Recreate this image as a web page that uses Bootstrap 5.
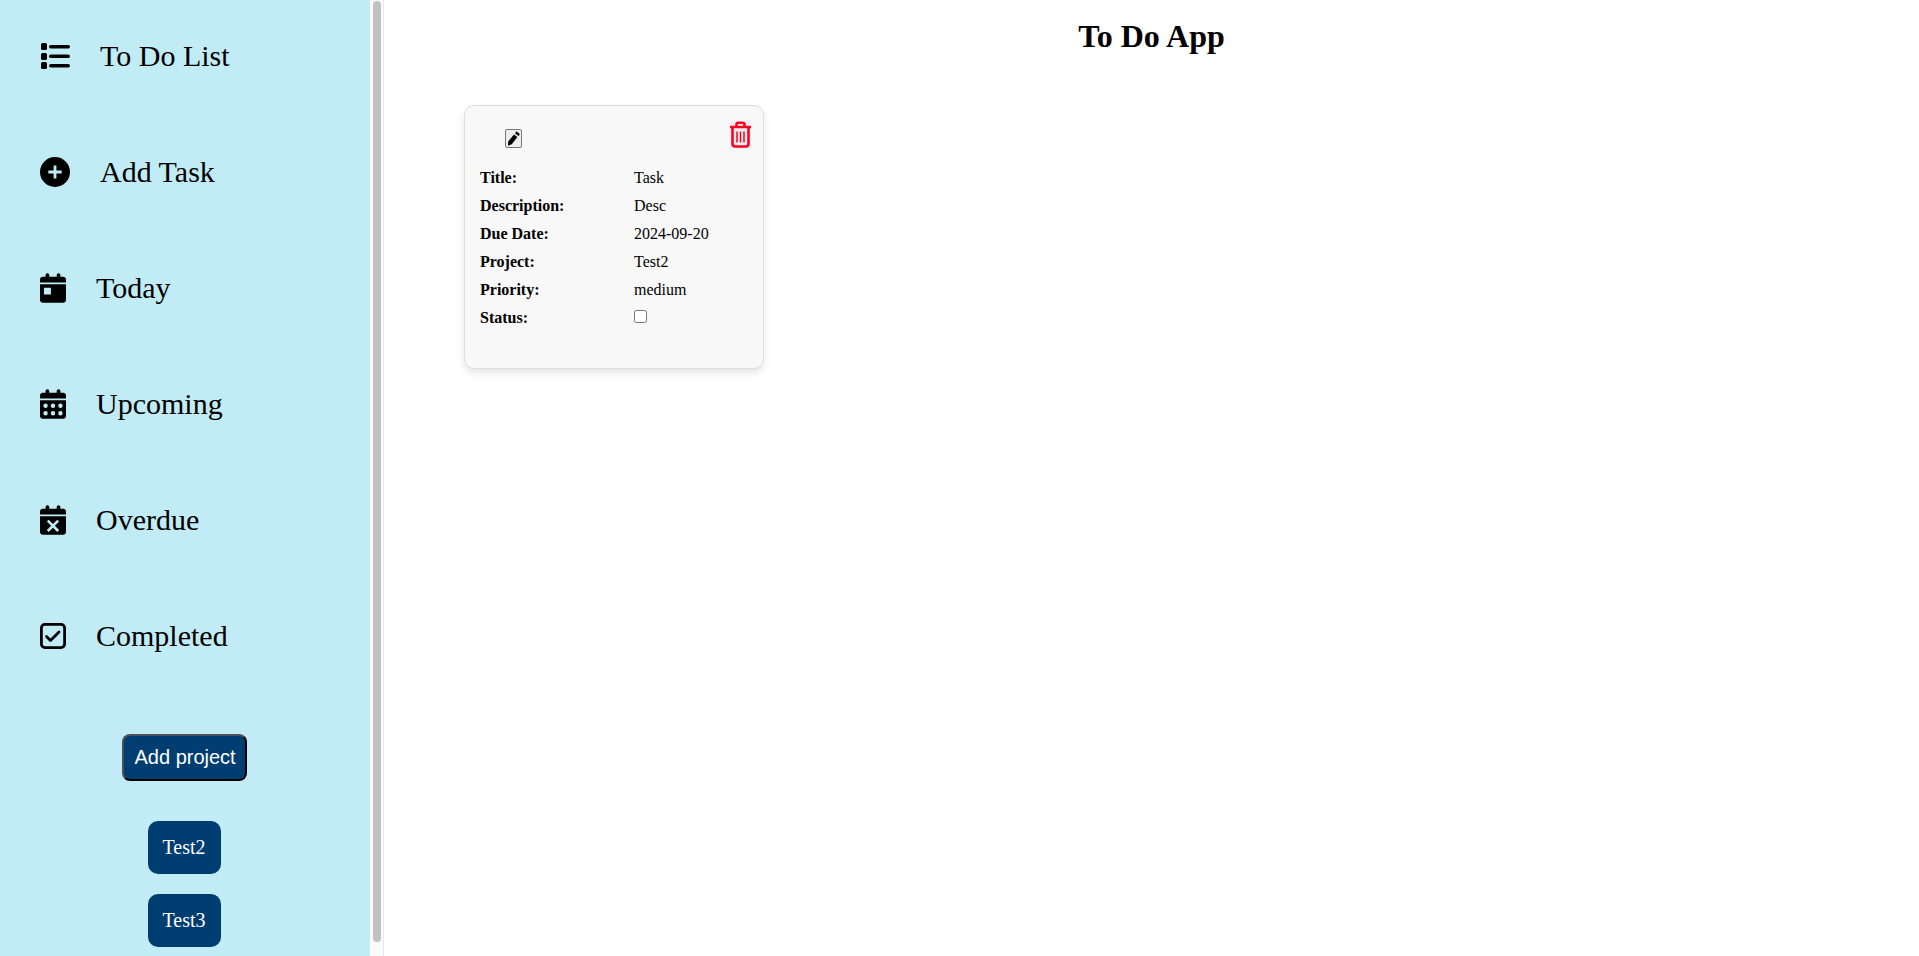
<!DOCTYPE html>
<html lang="en">
<head>
    <meta charset="UTF-8">
    <title>To Do App</title>
    <link href="https://cdn.jsdelivr.net/npm/bootstrap@5.3.3/dist/css/bootstrap.min.css" rel="stylesheet">
    <style>
        html, body {
            height: 100%;
        }

        body {
            font-family: "Liberation Serif", "Times New Roman", serif;
            font-size: 16px;
            color: #000;
            background-color: #fff;
            overflow: hidden;
        }

        .side-panel {
            width: 370px;
            height: 956px;
            flex-shrink: 0;
            overflow: hidden;
            padding: 38px 0 0;
            background-color: #c1ecf6;
        }

        .side-scroll {
            width: 14px;
            height: 956px;
            flex-shrink: 0;
            padding: 1px 2px 0 3px;
            background-color: #fafafa;
            border-right: 1px solid #e8e8e8;
        }

        .side-scroll-thumb {
            width: 8px;
            height: 941px;
            background-color: #c1c1c1;
            border-radius: 4px;
        }

        .side-menu {
            gap: 80px;
        }

        .side-link {
            height: 36px;
            font-size: 30px;
            line-height: 36px;
            color: #000;
            text-decoration: none;
        }

        .side-link svg {
            flex-shrink: 0;
            margin-left: 40px;
        }

        .wide-icon {
            margin-right: 30px;
        }

        .cal-icon {
            margin-right: 30px;
        }

        .add-project-btn {
            --bs-btn-padding-x: 11px;
            --bs-btn-padding-y: 0;
            --bs-btn-font-size: 20px;
            --bs-btn-border-radius: 8px;
            width: 125px;
            height: 47px;
            margin: 80px 2px 0 0;
            padding-bottom: 2px;
            font-family: "Liberation Sans", Arial, sans-serif;
            color: #fff;
            white-space: nowrap;
            background-color: #003d71;
            border: 2px solid #000;
            border-top-color: #4a5058;
            border-left-color: #4a5058;
        }

        .project-btn {
            --bs-btn-padding-x: 0;
            --bs-btn-padding-y: 0;
            --bs-btn-font-size: 20px;
            --bs-btn-border-radius: 10px;
            width: 73px;
            height: 53px;
            line-height: 53px;
            color: #fff;
            background-color: #003d71;
            border: 0;
        }

        .project-list {
            gap: 20px;
            margin: 40px 2px 0 0;
        }

        .page-title {
            margin: 16px 0 0;
            font-size: 32px;
            font-weight: 700;
            line-height: 40px;
        }

        .task-box {
            width: 300px;
            height: 264px;
            margin: 49px 0 0 80px;
            padding: 15px 12px 0 15px;
            background-color: #f8f8f8;
            border: 1px solid #ddd;
            border-radius: 10px;
            box-shadow: 0 4px 8px rgba(0, 0, 0, 0.1);
        }

        .edit-btn {
            width: 17px;
            height: 19px;
            margin: 8px 0 0 25px;
            padding: 0;
            background-color: #efefef;
            border: 1px solid #767676;
            border-radius: 2px;
        }

        .trash-btn {
            width: 21px;
            height: 28px;
            padding: 0;
            background-color: #efefef;
            border: 0;
        }

        .edit-btn svg, .trash-btn svg {
            display: block;
        }

        .task-fields {
            display: grid;
            grid-template-columns: 154px 1fr;
            grid-auto-rows: 28px;
            margin-top: 15px;
            line-height: 28px;
        }

        .task-check {
            width: 13px;
            height: 13px;
            margin: 6px 0 0;
        }
    </style>
</head>
<body class="d-flex">

<aside class="side-panel d-flex flex-column align-items-center">
    <nav class="side-menu d-flex flex-column w-100 flex-shrink-0">
        <a class="side-link d-flex align-items-center" href="#">
            <svg class="wide-icon" width="30" height="26" viewBox="0 0 30 26" fill="#000">
                <rect x="1" y="0" width="6" height="7" rx="1.500"/>
                <rect x="1" y="10" width="6" height="7" rx="1.500"/>
                <rect x="1" y="19" width="6" height="7" rx="1.500"/>
                <rect x="9" y="2" width="21" height="3.600" rx="1.800"/>
                <rect x="9" y="11.500" width="21" height="3.600" rx="1.800"/>
                <rect x="9" y="21" width="21" height="3.600" rx="1.800"/>
            </svg>
            To Do List
        </a>
        <a class="side-link d-flex align-items-center" href="#">
            <svg class="wide-icon" width="30" height="30" viewBox="0 0 30 30" fill="#000" fill-rule="evenodd">
                <path d="M15 0a15 15 0 1 0 0 30a15 15 0 1 0 0-30zM13.600 8.500h2.800v5.100h5.300v2.800h-5.300v5.100h-2.800v-5.100H8.300v-2.800h5.300z"/>
            </svg>
            Add Task
        </a>
        <a class="side-link d-flex align-items-center" href="#">
            <svg class="cal-icon" width="26" height="30" viewBox="0 0 448 512" fill="#000" fill-rule="evenodd">
                <path d="M128 0c17.700 0 32 14.300 32 32V64H288V32c0-17.700 14.300-32 32-32s32 14.300 32 32V64h48c26.500 0 48 21.500 48 48v48H0V112C0 85.500 21.500 64 48 64H96V32c0-17.700 14.300-32 32-32zM0 192H448V464c0 26.500-21.500 48-48 48H48c-26.500 0-48-21.500-48-48V192zM68 250v118h120V250z"/>
            </svg>
            Today
        </a>
        <a class="side-link d-flex align-items-center" href="#">
            <svg class="cal-icon" width="26" height="30" viewBox="0 0 448 512" fill="#000" fill-rule="evenodd">
                <path d="M128 0c17.700 0 32 14.300 32 32V64H288V32c0-17.700 14.300-32 32-32s32 14.300 32 32V64h48c26.500 0 48 21.500 48 48v48H0V112C0 85.500 21.500 64 48 64H96V32c0-17.700 14.300-32 32-32zM0 192H448V464c0 26.500-21.500 48-48 48H48c-26.500 0-48-21.500-48-48V192zM58 286a38 38 0 1 0 76 0a38 38 0 1 0-76 0zM186 286a38 38 0 1 0 76 0a38 38 0 1 0-76 0zM314 286a38 38 0 1 0 76 0a38 38 0 1 0-76 0zM58 414a38 38 0 1 0 76 0a38 38 0 1 0-76 0zM186 414a38 38 0 1 0 76 0a38 38 0 1 0-76 0zM314 414a38 38 0 1 0 76 0a38 38 0 1 0-76 0z"/>
            </svg>
            Upcoming
        </a>
        <a class="side-link d-flex align-items-center" href="#">
            <svg class="cal-icon" width="26" height="30" viewBox="0 0 448 512" fill="#000" fill-rule="evenodd">
                <path d="M128 0c17.700 0 32 14.300 32 32V64H288V32c0-17.700 14.300-32 32-32s32 14.300 32 32V64h48c26.500 0 48 21.500 48 48v48H0V112C0 85.500 21.500 64 48 64H96V32c0-17.700 14.300-32 32-32zM0 192H448V464c0 26.500-21.500 48-48 48H48c-26.500 0-48-21.500-48-48V192zM224 324L298 250L330 282L256 356L330 430L298 462L224 388L150 462L118 430L192 356L118 282L150 250z"/>
            </svg>
            Overdue
        </a>
        <a class="side-link d-flex align-items-center" href="#">
            <svg class="cal-icon" width="26" height="26" viewBox="0 0 26 26" fill="none" stroke="#000">
                <rect x="1.400" y="1.400" width="23.200" height="23.200" rx="3.500" stroke-width="2.800"/>
                <polyline points="6.500,13.500 10.500,17.500 19,9" stroke-width="2.800" stroke-linecap="round" stroke-linejoin="round"/>
            </svg>
            Completed
        </a>
    </nav>

    <button type="button" class="btn add-project-btn flex-shrink-0">Add project</button>

    <div class="project-list d-flex flex-column align-items-center flex-shrink-0">
        <a class="btn project-btn" href="#">Test2</a>
        <a class="btn project-btn" href="#">Test3</a>
    </div>
</aside>

<div class="side-scroll">
    <div class="side-scroll-thumb"></div>
</div>

<main class="flex-grow-1">
    <h1 class="page-title text-center">To Do App</h1>

    <div class="task-box">
        <div class="d-flex justify-content-between align-items-start">
            <button type="button" class="edit-btn">
                <svg width="15" height="17" viewBox="0 0 15 17" fill="#000">
                    <path d="M10.800 1.600l2.500 2c.4.400.4.900.1 1.300l-.9 1.200-3.400-2.700.9-1.500c.2-.5.400-.5.800-.3zM8 4.400l3.400 2.700-5.600 7.100-3.900 1.500.4-4.400z"/>
                </svg>
            </button>
            <button type="button" class="trash-btn">
                <svg width="21" height="28" viewBox="0 0 21 28" fill="none" stroke="#ff0022" stroke-width="2.600">
                    <path d="M6.500 5.500V3.600C6.500 2.400 7.300 1.800 8.300 1.800h4.400c1 0 1.800.6 1.800 1.800v1.900"/>
                    <path d="M0.800 6h19.400" stroke-linecap="round"/>
                    <path d="M2.500 6v16.500c0 1.800 1 3 2.800 3h10.400c1.800 0 2.800-1.200 2.800-3V6"/>
                    <path d="M7 10.500v11M10.500 10.500v11M14 10.500v11" stroke-width="1.500"/>
                </svg>
            </button>
        </div>

        <div class="task-fields">
            <strong>Title:</strong><span>Task</span>
            <strong>Description:</strong><span>Desc</span>
            <strong>Due Date:</strong><span>2024-09-20</span>
            <strong>Project:</strong><span>Test2</span>
            <strong>Priority:</strong><span>medium</span>
            <strong>Status:</strong><span><input type="checkbox" class="task-check d-block"></span>
        </div>
    </div>
</main>

<script src="https://cdn.jsdelivr.net/npm/bootstrap@5.3.3/dist/js/bootstrap.bundle.min.js"></script>
</body>
</html>
